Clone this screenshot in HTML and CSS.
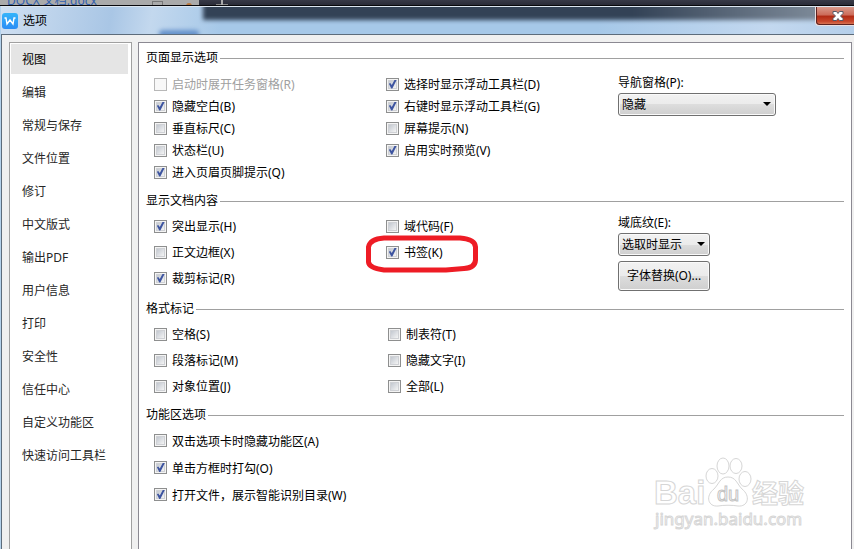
FILE: index.html
```html
<!DOCTYPE html>
<html lang="zh-CN">

<head>
    <meta charset="UTF-8">
    <meta name="viewport" content="width=device-width, initial-scale=1.0">
    <title>选项</title>
    <link rel="stylesheet" href="styles.css">
</head>

<body>
    <!-- 后面的文档窗口 -->
    <div class="back-window">
        <div class="doc-tab">
            <span class="doc-name">DOCX 文档.docx</span>
            <i class="doc-icon"></i>
            <i class="doc-dot"></i>
        </div>
        <i class="new-tab"></i>
    </div>

    <div class="dialog">
        <div class="title-bar">
            <div class="glass"></div>
            <i class="glass-spot"></i>
            <svg class="logo" viewBox="0 0 16 16">
                <defs>
                    <linearGradient id="logo-bg" x1="0" y1="0" x2="0" y2="1">
                        <stop offset="0" stop-color="#35b4fa" />
                        <stop offset="1" stop-color="#2b8df5" />
                    </linearGradient>
                </defs>
                <rect width="16" height="16" rx="3" fill="url(#logo-bg)" />
                <path d="M2.500 5H4l1 6L8 7l3 4 1-6h1.500" fill="none" stroke="#fff" stroke-width="1.400" />
            </svg>
            <h1 class="title">选项</h1>
            <button class="close" type="button" aria-label="关闭">
                <svg viewBox="0 0 12 10">
                    <path d="M1 .5h3.500L6 2.500 7.500.5H11v2L8.500 5 11 7.500v2H7.500L6 7.500 4.500 9.500H1v-2L3.500 5 1 2.500z" fill="#fff" stroke="#565a68" />
                </svg>
            </button>
        </div>

        <div class="dialog-body">
            <nav class="side">
                <ul>
                    <li><a class="side-item active" href="#">视图</a></li>
                    <li><a class="side-item" href="#">编辑</a></li>
                    <li><a class="side-item" href="#">常规与保存</a></li>
                    <li><a class="side-item" href="#">文件位置</a></li>
                    <li><a class="side-item" href="#">修订</a></li>
                    <li><a class="side-item" href="#">中文版式</a></li>
                    <li><a class="side-item" href="#">输出PDF</a></li>
                    <li><a class="side-item" href="#">用户信息</a></li>
                    <li><a class="side-item" href="#">打印</a></li>
                    <li><a class="side-item" href="#">安全性</a></li>
                    <li><a class="side-item" href="#">信任中心</a></li>
                    <li><a class="side-item" href="#">自定义功能区</a></li>
                    <li><a class="side-item" href="#">快速访问工具栏</a></li>
                </ul>
            </nav>

            <form class="main">
                <section class="group page-group">
                    <h2>页面显示选项</h2>
                    <div class="cols">
                        <div class="col">
                            <label class="check disabled"><input type="checkbox" disabled>启动时展开任务窗格(R)</label>
                            <label class="check"><input type="checkbox" checked>隐藏空白(B)</label>
                            <label class="check"><input type="checkbox">垂直标尺(C)</label>
                            <label class="check"><input type="checkbox">状态栏(U)</label>
                            <label class="check"><input type="checkbox" checked>进入页眉页脚提示(Q)</label>
                        </div>
                        <div class="col">
                            <label class="check"><input type="checkbox" checked>选择时显示浮动工具栏(D)</label>
                            <label class="check"><input type="checkbox" checked>右键时显示浮动工具栏(G)</label>
                            <label class="check"><input type="checkbox">屏幕提示(N)</label>
                            <label class="check"><input type="checkbox" checked>启用实时预览(V)</label>
                        </div>
                        <div class="col">
                            <label class="field-name" for="nav-pane">导航窗格(P):</label>
                            <span class="select wide">
                                <select id="nav-pane">
                                    <option>隐藏</option>
                                </select>
                            </span>
                        </div>
                    </div>
                </section>

                <section class="group">
                    <h2>显示文档内容</h2>
                    <div class="cols">
                        <div class="col">
                            <label class="check"><input type="checkbox" checked>突出显示(H)</label>
                            <label class="check"><input type="checkbox">正文边框(X)</label>
                            <label class="check"><input type="checkbox" checked>裁剪标记(R)</label>
                        </div>
                        <div class="col">
                            <label class="check"><input type="checkbox">域代码(F)</label>
                            <div class="marked">
                                <label class="check"><input type="checkbox" checked>书签(K)</label>
                                <!-- 红圈标注 -->
                                <svg class="red-mark" viewBox="0 0 112 38">
                                    <path d="M18 3 L94 3 Q109 4 109.500 12 V25 Q109 33 98 33.500 L80 35 H18 Q3 33 2.500 27 V12 Q4 4 18 3Z" />
                                </svg>
                            </div>
                        </div>
                        <div class="col">
                            <label class="field-name" for="shading">域底纹(E):</label>
                            <span class="select">
                                <select id="shading">
                                    <option>选取时显示</option>
                                </select>
                            </span>
                            <button class="btn" type="button">字体替换(O)...</button>
                        </div>
                    </div>
                </section>

                <section class="group format-group">
                    <h2>格式标记</h2>
                    <div class="cols">
                        <div class="col">
                            <label class="check"><input type="checkbox">空格(S)</label>
                            <label class="check"><input type="checkbox">段落标记(M)</label>
                            <label class="check"><input type="checkbox">对象位置(J)</label>
                        </div>
                        <div class="col">
                            <label class="check"><input type="checkbox">制表符(T)</label>
                            <label class="check"><input type="checkbox">隐藏文字(I)</label>
                            <label class="check"><input type="checkbox">全部(L)</label>
                        </div>
                    </div>
                </section>

                <section class="group ribbon-group">
                    <h2>功能区选项</h2>
                    <div class="cols">
                        <div class="col">
                            <label class="check"><input type="checkbox">双击选项卡时隐藏功能区(A)</label>
                            <label class="check"><input type="checkbox" checked>单击方框时打勾(O)</label>
                            <label class="check"><input type="checkbox" checked>打开文件，展示智能识别目录(W)</label>
                        </div>
                    </div>
                </section>
            </form>
        </div>
    </div>

    <!-- 水印 -->
    <svg class="watermark" viewBox="0 0 160 80">
        <g class="wm-line">
            <text class="wm-big" x="4" y="50">Bai</text>
            <ellipse cx="62" cy="22" rx="6" ry="7.500" />
            <ellipse cx="73" cy="12" rx="6" ry="8" />
            <ellipse cx="86" cy="12" rx="6" ry="7.500" />
            <ellipse cx="95" cy="25" rx="6" ry="7.500" />
            <path d="M78 23 C86 23 87 30 92 35 C101 42 98 53 88 52 C82 51 74 51 68 52 C58 53 55 42 64 35 C69 30 70 23 78 23Z" />
            <text class="wm-du" x="67" y="47">du</text>
            <text class="wm-cn" x="102" y="49">经验</text>
            <text class="wm-url" x="5" y="71">jingyan.baidu.com</text>
        </g>
    </svg>
</body>

</html>
```
FILE: styles.css
```css
* {
    margin: 0;
    padding: 0;
    box-sizing: border-box;
}

html,
body {
    height: 100%;
}

body {
    display: flex;
    flex-direction: column;
    overflow: hidden;
    position: relative;
    font: 12px/16px "Noto Sans", "Noto Sans CJK SC", sans-serif;
    color: #000;
}

li {
    list-style: none;
}

button,
select {
    font: inherit;
    color: inherit;
}

/* 后面的窗口 */
.back-window {
    flex: none;
    display: flex;
    height: 6px;
    overflow: hidden;
    background: linear-gradient(#383a48, #2a2c38);
    border-bottom: 1px solid #08080c;
}

.doc-tab {
    display: flex;
    gap: 55px;
    width: 199px;
    height: 5px;
    padding-left: 7px;
    overflow: hidden;
    background: #aaa;
    color: #315fae;
}

.doc-name {
    margin-top: -7px;
    white-space: nowrap;
}

.doc-icon {
    width: 11px;
    height: 9px;
    margin-top: 1px;
    border: 1px solid #777;
}

.doc-dot {
    width: 6px;
    height: 6px;
    margin: 3px 0 0 -32px;
    border-radius: 50%;
    background: #b9763c;
}

.new-tab {
    width: 12px;
    height: 5px;
    margin-left: 17px;
    background: linear-gradient(#aaa, #aaa) 5px 0 / 2px 5px no-repeat, linear-gradient(#888, #888) 0 4px / 12px 1px no-repeat;
}

/* 对话框 */
.dialog {
    flex: 1;
    min-height: 0;
    display: flex;
    flex-direction: column;
    border-left: 1px solid #b4d2ec;
}

.title-bar {
    flex: none;
    display: flex;
    align-items: center;
    gap: 5px;
    height: 28px;
    padding-left: 1px;
    position: relative;
    overflow: hidden;
    border-top: 1px solid #dce6f0;
    background: linear-gradient(100deg, #cfdff1, #a9c6e5 110px, #c3d8ee 150px, #a6c8e8 220px, #a6c8e8 70%, #c3d8ef 90%, #b5cfea);
}

.glass {
    position: absolute;
    top: -15px;
    left: 202px;
    right: -10px;
    height: 28px;
    background: linear-gradient(90deg, #334256 65%, #7a8796 92%, #8c97a5);
    filter: blur(2px);
}

.glass-spot {
    position: absolute;
    left: 158px;
    bottom: -5px;
    width: 40px;
    height: 9px;
    border-radius: 4px;
    background: #6692cb;
    filter: blur(2px);
}

.logo {
    width: 16px;
    height: 16px;
    position: relative;
}

.title {
    font-size: 12px;
    font-weight: normal;
}

.close {
    align-self: flex-start;
    width: 39px;
    height: 19px;
    margin-left: auto;
    position: relative;
    border: 1px solid #eadfe0;
    border-width: 0 0 1px 1px;
    border-bottom-left-radius: 4px;
    background: linear-gradient(#d99a8c, #cc6a58 45%, #b02a14 50%, #c8472c 80%, #dd8462);
    box-shadow: inset 1px -1px #5e2320;
}

.close svg {
    display: block;
    width: 12px;
    height: 10px;
    margin-left: 16px;
}

.dialog-body {
    flex: 1;
    min-height: 0;
    display: flex;
    gap: 6px;
    padding: 7px 2px 0 7px;
    background: #f0f0f0;
    border-top: 1px solid #5d6c7b;
    border-left: 1px solid #5d6c7b;
}

/* 左侧菜单 */
.side {
    flex: none;
    width: 123px;
    padding: 1px 3px 0 1px;
    background: #fff;
    border: 1px solid #a0a0a0;
    border-bottom: 0;
}

.side-item {
    display: block;
    height: 30px;
    margin-bottom: 3px;
    padding-left: 11px;
    line-height: 32px;
    color: #262626;
    text-decoration: none;
}

.side-item.active {
    background: #e5e5e5;
    color: #000;
}

/* 右侧选项 */
.main {
    flex: 1;
    min-width: 0;
    padding: 7px 7px 0;
    background: #fff;
    border: 1px solid #8b8992;
    border-bottom: 0;
}

.group {
    margin-bottom: 10px;
}

.group h2 {
    display: flex;
    align-items: center;
    gap: 2px;
    margin-bottom: 4px;
    font-size: 12px;
    font-weight: normal;
}

.group h2::after {
    content: "";
    flex: 1;
    height: 1px;
    background: #a0a0a0;
}

.page-group h2 {
    margin-bottom: 7px;
}

.format-group {
    margin-bottom: 8px;
}

.cols {
    display: grid;
    grid-template-columns: 232px 232px 1fr;
    padding-left: 8px;
}

.format-group .cols {
    grid-template-columns: 234px 232px 1fr;
}

.check {
    display: flex;
    align-items: center;
    gap: 5px;
    width: max-content;
    height: 26px;
    padding-top: 2px;
    white-space: nowrap;
}

.page-group .check {
    height: 22px;
}

.ribbon-group .check {
    height: 27px;
}

.disabled {
    color: #a0a0a0;
}

.check input {
    appearance: none;
    width: 13px;
    height: 13px;
    margin-bottom: 2px;
    position: relative;
    border: 1px solid #8e8f8f;
    background: linear-gradient(135deg, #c3c8d0, #f4f4f4) content-box, #f4f4f4;
    padding: 2px;
    box-shadow: inset 0 0 0 1px #f4f4f4, inset 0 0 0 2px #cfd1d5;
}

.check input:disabled {
    border-color: #b8b8b8;
    background: #f8f8f8;
    box-shadow: none;
}

.check input:checked::after {
    content: "";
    position: absolute;
    inset: 1px;
    background: #3d54a0;
    clip-path: polygon(10% 48%, 25% 38%, 42% 62%, 75% 0, 98% 0, 48% 100%, 36% 100%);
}

.field-name {
    display: block;
    line-height: 20px;
}

.select {
    display: block;
    width: 92px;
    height: 23px;
    position: relative;
}

.select.wide {
    width: 158px;
}

.select select {
    appearance: none;
    display: block;
    width: 100%;
    height: 100%;
    padding: 0 20px 0 3px;
}

.select::after {
    content: "";
    position: absolute;
    top: 9px;
    right: 5px;
    border: 4px solid transparent;
    border-top-color: #000;
    border-bottom: 0;
    pointer-events: none;
}

.select select,
.btn {
    border: 1px solid #707070;
    border-radius: 3px;
    background: linear-gradient(#f2f2f2, #ebebeb 50%, #ddd 50%, #cfcfcf);
    box-shadow: inset 0 0 0 1px #fafafa;
}

.btn {
    display: block;
    width: 92px;
    height: 30px;
    margin-top: 5px;
}

.marked {
    position: relative;
}

.red-mark {
    position: absolute;
    top: -4px;
    left: -20px;
    width: 112px;
    height: 38px;
    fill: none;
    stroke: #ee1c25;
    stroke-width: 5px;
    pointer-events: none;
}

/* 水印 */
.watermark {
    position: absolute;
    right: 44px;
    bottom: 15px;
    width: 160px;
    height: 80px;
    pointer-events: none;
}

.wm-line {
    fill: #fff;
    stroke: #d6d6d6;
    stroke-width: 1px;
    font-family: "Liberation Sans", "Noto Sans CJK SC", sans-serif;
}

.wm-big {
    font-size: 33px;
    font-weight: bold;
}

.wm-du {
    font-size: 20px;
    stroke: #c4c4c4;
}

.wm-cn {
    font-family: "Noto Sans CJK SC", sans-serif;
    font-size: 26px;
    font-weight: bold;
}

.wm-url {
    font-family: "Noto Sans", sans-serif;
    font-size: 17px;
}
```
